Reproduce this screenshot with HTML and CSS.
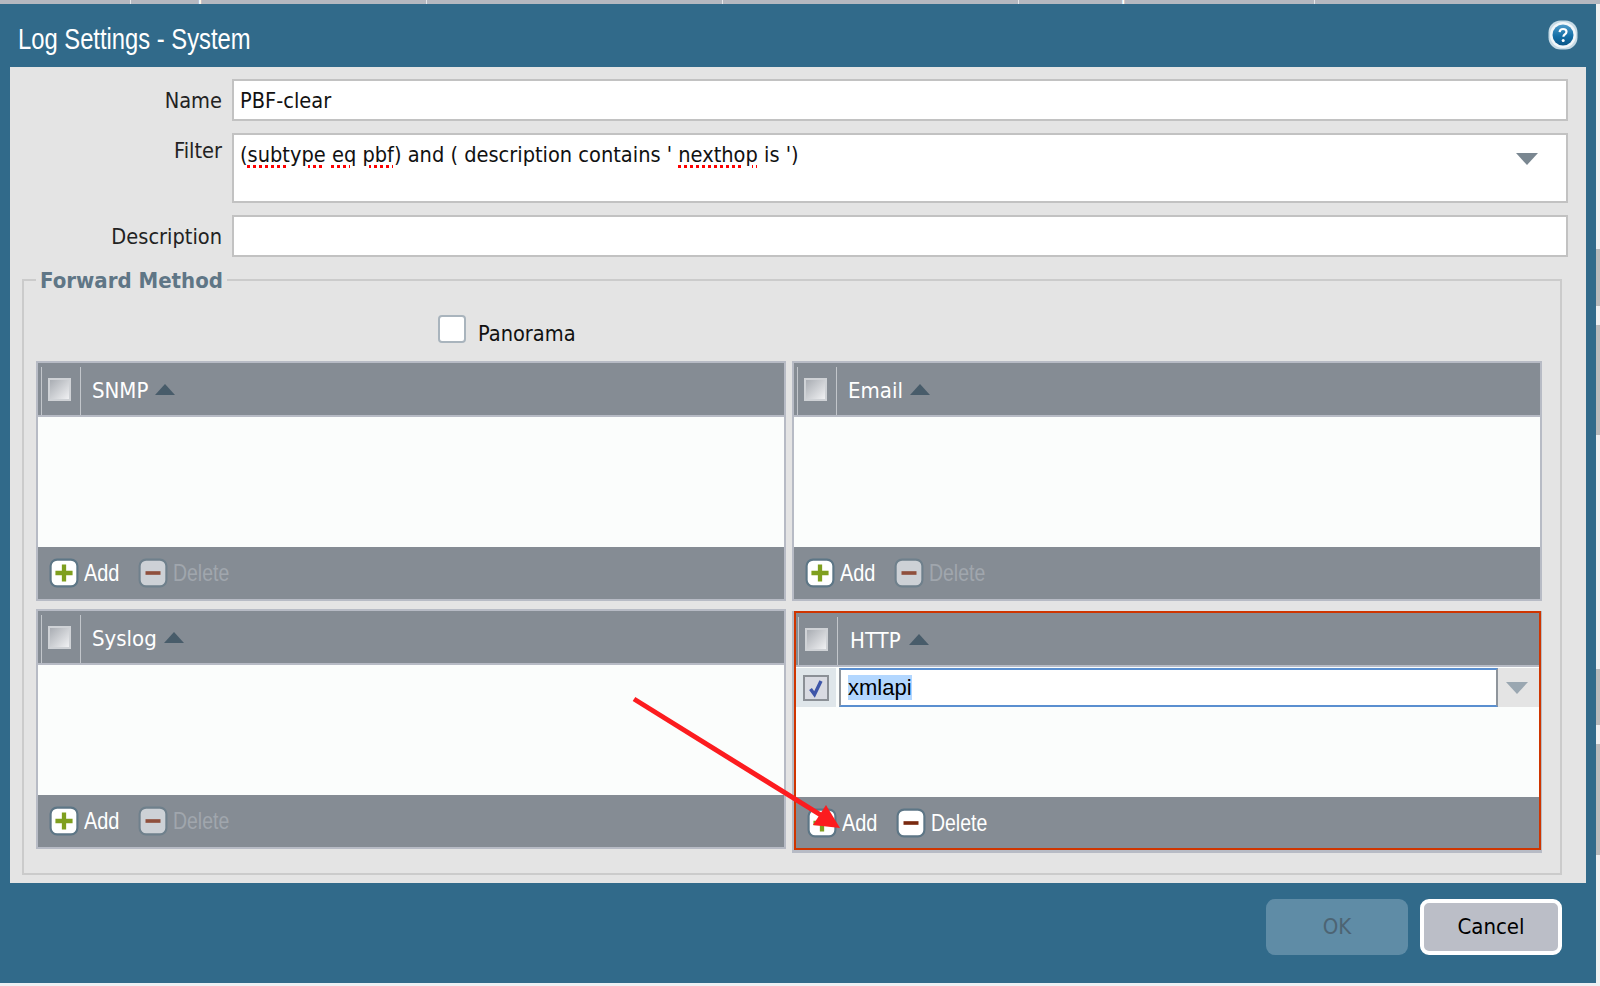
FILE: index.html
```html
<!DOCTYPE html>
<html lang="en">
<head>
<meta charset="utf-8">
<title>Log Settings - System</title>
<link rel="stylesheet" href="styles.css">
</head>
<body>
<div class="page">
  <div class="topbar">
    <div class="topcell first"></div>
    <div class="topcell">Description</div>
    <div class="topcell">Filter</div>
    <div class="topcell">Panorama</div>
    <div class="topcell">SNMP Trap</div>
    <div class="topcell">Email</div>
  </div>
  <div class="stage">
    <div class="window">
      <header class="titlebar">
        <h1 class="title">Log Settings - System</h1>
        <svg class="help" viewBox="0 0 30 30" aria-label="Help">
          <defs>
            <linearGradient id="helpfill" x1="0" y1="0" x2="0" y2="1">
              <stop offset="0" stop-color="#4f9ccb"/><stop offset="0.55" stop-color="#156fa6"/><stop offset="1" stop-color="#0a5688"/>
            </linearGradient>
          </defs>
          <rect x="0.5" y="0.5" width="29" height="29" rx="12" fill="#c7dbe6"/>
          <circle cx="15" cy="15" r="13" fill="#f2f7fa"/>
          <circle cx="15" cy="15" r="10.5" fill="url(#helpfill)"/>
          <path d="M11.6 12.2c.2-2.2 1.6-3.2 3.5-3.2 2 0 3.4 1.1 3.4 2.8 0 1.4-.8 2-1.8 2.7-.9.6-1.3 1.1-1.3 2.3" fill="none" stroke="#fff" stroke-width="2.2"/>
          <circle cx="15.2" cy="20.4" r="1.5" fill="#fff"/>
        </svg>
      </header>
      <main class="panel">
        <div class="form">
          <label class="label low">Name</label>
          <div class="field">PBF-clear</div>
          <label class="label high">Filter</label>
          <div class="field filter">
            <span>(<span class="spell">subtype</span> <span class="spell">eq</span> <span class="spell">pbf</span>) and ( description contains ' <span class="spell">nexthop</span> is ')</span>
            <span class="tri-down"></span>
          </div>
          <label class="label low">Description</label>
          <div class="field"></div>
        </div>
        <fieldset class="method">
          <legend class="legend">Forward Method</legend>
          <div class="panorama">
            <span class="bigcheck"></span>
            <span class="panorama-text">Panorama</span>
          </div>
          <div class="cards">
            <section class="card">
              <div class="card-head"><span class="sep"></span><span class="cb"></span><span class="sep"></span><span class="col">SNMP</span><span class="tri-up"></span></div>
              <div class="card-body"></div>
              <div class="card-foot">
                <span class="btn"><svg class="ico" viewBox="0 0 28 28"><rect x="1.5" y="1.5" width="25" height="25" rx="6" fill="#fff" stroke="#5d7686" stroke-width="2"/><path d="M14 6v16M6 14h16" stroke="#7f9f1f" stroke-width="4"/></svg><span class="btn-text add">Add</span></span>
                <span class="btn off"><svg class="ico" viewBox="0 0 28 28"><rect x="1.5" y="1.5" width="25" height="25" rx="6" fill="#cdd1d6" stroke="#6f808c" stroke-width="2"/><path d="M7 14h14" stroke="#8f4f3c" stroke-width="3.4"/></svg><span class="btn-text del">Delete</span></span>
              </div>
            </section>
            <section class="card">
              <div class="card-head"><span class="sep"></span><span class="cb"></span><span class="sep"></span><span class="col">Email</span><span class="tri-up"></span></div>
              <div class="card-body"></div>
              <div class="card-foot">
                <span class="btn"><svg class="ico" viewBox="0 0 28 28"><rect x="1.5" y="1.5" width="25" height="25" rx="6" fill="#fff" stroke="#5d7686" stroke-width="2"/><path d="M14 6v16M6 14h16" stroke="#7f9f1f" stroke-width="4"/></svg><span class="btn-text add">Add</span></span>
                <span class="btn off"><svg class="ico" viewBox="0 0 28 28"><rect x="1.5" y="1.5" width="25" height="25" rx="6" fill="#cdd1d6" stroke="#6f808c" stroke-width="2"/><path d="M7 14h14" stroke="#8f4f3c" stroke-width="3.4"/></svg><span class="btn-text del">Delete</span></span>
              </div>
            </section>
            <section class="card">
              <div class="card-head"><span class="sep"></span><span class="cb"></span><span class="sep"></span><span class="col">Syslog</span><span class="tri-up"></span></div>
              <div class="card-body"></div>
              <div class="card-foot">
                <span class="btn"><svg class="ico" viewBox="0 0 28 28"><rect x="1.5" y="1.5" width="25" height="25" rx="6" fill="#fff" stroke="#5d7686" stroke-width="2"/><path d="M14 6v16M6 14h16" stroke="#7f9f1f" stroke-width="4"/></svg><span class="btn-text add">Add</span></span>
                <span class="btn off"><svg class="ico" viewBox="0 0 28 28"><rect x="1.5" y="1.5" width="25" height="25" rx="6" fill="#cdd1d6" stroke="#6f808c" stroke-width="2"/><path d="M7 14h14" stroke="#8f4f3c" stroke-width="3.4"/></svg><span class="btn-text del">Delete</span></span>
              </div>
            </section>
            <section class="card http">
              <div class="http-inner">
                <div class="card-head"><span class="sep"></span><span class="cb"></span><span class="sep"></span><span class="col">HTTP</span><span class="tri-up"></span></div>
                <div class="card-body">
                  <div class="row">
                    <div class="row-check">
                      <svg class="rowcb" viewBox="0 0 26 26"><rect x="1" y="1" width="24" height="24" fill="#d9dbe2" stroke="#8b9096" stroke-width="2"/><path d="M7.5 14l4 5.5L18 6" fill="none" stroke="#3f56a8" stroke-width="3.4"/></svg>
                    </div>
                    <div class="row-input"><span class="selected">xmlapi</span></div>
                    <div class="row-drop"><span class="tri-down light"></span></div>
                  </div>
                </div>
                <div class="card-foot">
                  <span class="btn"><svg class="ico" viewBox="0 0 28 28"><rect x="1.5" y="1.5" width="25" height="25" rx="6" fill="#fff" stroke="#5d7686" stroke-width="2"/><path d="M14 6v16M6 14h16" stroke="#7f9f1f" stroke-width="4"/></svg><span class="btn-text add">Add</span></span>
                  <span class="btn on"><svg class="ico" viewBox="0 0 28 28"><rect x="1.5" y="1.5" width="25" height="25" rx="6" fill="#fff" stroke="#5d7686" stroke-width="2"/><path d="M7 14h14" stroke="#7a2a10" stroke-width="3.4"/></svg><span class="btn-text del">Delete</span></span>
                </div>
              </div>
            </section>
          </div>
        </fieldset>
      </main>
      <footer class="actions">
        <button class="action ok" type="button">OK</button>
        <button class="action cancel" type="button">Cancel</button>
      </footer>
    </div>
    <div class="edge">
      <span class="edge-a"></span><span class="edge-b"></span><span class="edge-a"></span><span class="edge-b"></span><span class="edge-a"></span>
      <span class="edge-b"></span><span class="edge-a"></span><span class="edge-b"></span><span class="edge-a"></span>
    </div>
  </div>
</div>
<svg class="arrow" viewBox="0 0 1600 986" aria-hidden="true">
  <path d="M634 699L824 817" stroke="#fc1c1f" stroke-width="5" fill="none"/>
  <path d="M840 828L813 825L826 805Z" fill="#fc1c1f"/>
</svg>
</body>
</html>
```

FILE: styles.css
```css
* { box-sizing: border-box; }
html, body { margin: 0; padding: 0; }
body {
  width: 1600px;
  height: 986px;
  overflow: hidden;
  position: relative;
  background: #edf0f3;
  font-family: "DejaVu Sans Condensed", "DejaVu Sans", sans-serif;
  font-size: 21.6px;
  color: #111;
}
.page { display: flex; flex-direction: column; height: 983px; }

.topbar {
  height: 4px;
  flex: none;
  display: flex;
  overflow: hidden;
  background: #b5b8c0;
  color: #fff;
  font-family: "Liberation Sans", sans-serif;
  font-size: 20px;
}
.topcell {
  flex: none;
  width: 296px;
  height: 22px;
  margin-top: -18px;
  padding-left: 10px;
  line-height: 22px;
  border-left: 1px solid #e6e7ea;
  white-space: nowrap;
}
.topcell.first { width: 130px; border-left: 0; }

.stage { display: flex; flex: 1; min-height: 0; }
.window {
  width: 1596px;
  display: flex;
  flex-direction: column;
  background: #316a8a;
}
.titlebar {
  height: 63px;
  flex: none;
  display: flex;
  align-items: center;
  justify-content: space-between;
  padding: 0 18px;
}
.title {
  margin: 7px 0 0;
  font-family: "Liberation Sans", sans-serif;
  font-weight: 400;
  font-size: 29px;
  color: #fff;
  transform: scaleX(0.82);
  transform-origin: left center;
}
.help { width: 30px; height: 30px; margin-top: -2px; }

.panel {
  height: 816px;
  flex: none;
  margin: 0 10px;
  padding-top: 12px;
  background: #e4e4e4;
}
.form {
  display: grid;
  grid-template-columns: 212px 1fr;
  grid-template-rows: 42px 70px 42px;
  column-gap: 10px;
  row-gap: 12px;
  padding-right: 18px;
}
.label {
  text-align: right;
  color: #222;
}
.label.low { line-height: 44px; }
.label.high { line-height: 36px; }
.field {
  border: 2px solid #c2c2c2;
  background: #fff;
  padding: 0 6px;
  line-height: 40px;
  color: #111;
}
.filter {
  display: flex;
  justify-content: space-between;
  padding-right: 28px;
}
.spell {
  text-decoration: underline dotted #f00 3px;
  text-underline-offset: 3px;
}
.tri-down {
  width: 0;
  height: 0;
  margin-top: 18px;
  border-left: 11px solid transparent;
  border-right: 11px solid transparent;
  border-top: 12px solid #7a8791;
}
.tri-down.light { margin-top: 0; border-top-color: #9aa7b1; }

.method {
  margin: 9px 24px 0 12px;
  padding: 0 17px 0 12px;
  border: 2px solid #cbcbcb;
  height: 609px;
  min-width: 0;
}
.legend {
  margin-left: 0;
  padding: 0 4px;
  height: 28px;
  line-height: 30px;
  font-size: 22px;
  font-weight: 700;
  color: #5f7686;
}
.panorama {
  display: flex;
  align-items: flex-start;
  height: 28px;
  margin-top: 21px;
  padding-left: 402px;
}
.bigcheck {
  width: 28px;
  height: 28px;
  background: #fff;
  border: 2px solid #a9b4bd;
  border-radius: 4px;
}
.panorama-text { margin-left: 12px; padding-top: 6px; color: #111; }

.cards {
  display: grid;
  grid-template-columns: 750px 750px;
  grid-template-rows: 240px 240px;
  column-gap: 6px;
  row-gap: 8px;
  margin-top: 18px;
}
.card {
  display: flex;
  flex-direction: column;
  border: 2px solid #b7bbc5;
  background: #858c94;
}
.card-head {
  height: 52px;
  flex: none;
  display: flex;
  align-items: center;
  padding-left: 3px;
  color: #fff;
}
.sep { width: 1px; height: 48px; margin-top: 4px; background: #c2c6cb; }
.cb {
  width: 23px;
  height: 23px;
  margin: 0 9px 0 6px;
  border: 2px solid #cfd2d6;
  background: linear-gradient(135deg, #a9adb3, #f0f1f3);
}
.col {
  margin: 3px 0 0 11px;
  font-size: 22px;
  color: #fff;
}
.tri-up {
  width: 0;
  height: 0;
  margin: 1px 0 0 7px;
  border-left: 10px solid transparent;
  border-right: 10px solid transparent;
  border-bottom: 11px solid #485c6a;
}
.card-body {
  flex: none;
  height: 132px;
  background: #fbfdfc;
  border-top: 2px solid #b7bbc5;
}
.card-foot {
  flex: 1;
  display: flex;
  align-items: center;
  padding-left: 11px;
  color: #fff;
  font-family: "Liberation Sans", sans-serif;
  font-size: 24px;
}
.btn { display: flex; align-items: center; margin-right: 20px; }
.btn.off { color: #a0a6ad; }
.ico { width: 30px; height: 30px; margin-right: 5px; }
.btn-text {
  display: block;
  white-space: nowrap;
  transform-origin: left center;
}
.btn-text.add { width: 34px; transform: scaleX(0.83); }
.btn-text.del { width: 55px; transform: scaleX(0.81); }

.http {
  margin-top: 2px;
  margin-bottom: -4px;
  padding: 0;
  border-top-width: 0;
  border-right-width: 1px;
  border-bottom-width: 3px;
  border-left-width: 2px;
}
.http-inner {
  flex: 1;
  display: flex;
  flex-direction: column;
  border: 2px solid #cf3500;
}
.http .card-body { height: 132px; }
.http .card-foot { padding-left: 11px; }
.http .sep:first-child { margin-left: -1px; }
.http .col { margin-left: 12px; }
.http .tri-up { margin-left: 8px; }
.row { display: flex; height: 39px; margin-top: 1px; }
.row-check {
  width: 40px;
  flex: none;
  display: flex;
  align-items: center;
  justify-content: center;
  background: #dfe6ea;
}
.rowcb { width: 26px; height: 26px; }
.row-input {
  flex: 1;
  margin-left: 3px;
  padding: 0 7px;
  background: #fff;
  border: 2px solid #8f959c;
  border-bottom-color: #5a8fd0;
  border-top-color: #5a8fd0;
  font-family: "Liberation Sans", sans-serif;
  font-size: 22px;
  line-height: 35px;
  color: #000;
}
.selected { background: #b3d7ff; }
.row-drop {
  width: 41px;
  flex: none;
  display: flex;
  align-items: center;
  justify-content: center;
  background: #e4e4e4;
  padding-right: 4px;
}

.actions {
  flex: 1;
  display: flex;
  justify-content: flex-end;
  gap: 12px;
  padding: 16px 34px 0 0;
}
.action {
  width: 142px;
  height: 56px;
  border-radius: 9px;
  font-family: inherit;
  font-size: 22px;
  padding: 0 0 2px;
}
.ok { background: #5f8ca6; border: 0; color: #4d6473; }
.cancel { background: #bbbec7; border: 4px solid #fff; color: #000; }

.edge { width: 4px; display: flex; flex-direction: column; }
.edge-a { background: #f0f0f0; }
.edge-b { background: #bcbcbc; }
.edge span:nth-child(1) { height: 245px; }
.edge span:nth-child(2) { height: 57px; }
.edge span:nth-child(3) { height: 19px; }
.edge span:nth-child(4) { height: 110px; }
.edge span:nth-child(5) { height: 234px; }
.edge span:nth-child(6) { height: 56px; }
.edge span:nth-child(7) { height: 19px; }
.edge span:nth-child(8) { height: 111px; }
.edge span:nth-child(9) { height: 128px; }

.arrow {
  position: absolute;
  left: 0;
  top: 0;
  width: 1600px;
  height: 986px;
  pointer-events: none;
}
```
